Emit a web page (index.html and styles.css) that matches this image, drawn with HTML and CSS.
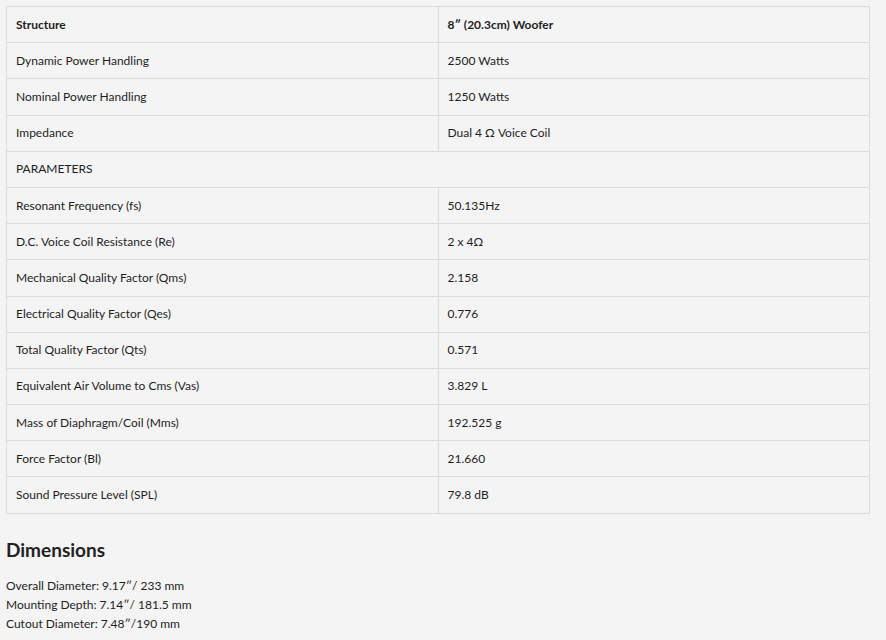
FILE: index.html
```html
<!DOCTYPE html>
<html lang="en">
<head>
    <meta charset="UTF-8">
    <meta name="viewport" content="width=device-width, initial-scale=1.0">
    <title>Specifications</title>
    <link rel="stylesheet" href="styles.css">
</head>
<body>
    <div class="specs">
        <table class="spec-table">
            <tr class="head">
                <td>Structure</td>
                <td>8″ (20.3cm) Woofer</td>
            </tr>
            <tr>
                <td>Dynamic Power Handling</td>
                <td>2500 Watts</td>
            </tr>
            <tr>
                <td>Nominal Power Handling</td>
                <td>1250 Watts</td>
            </tr>
            <tr>
                <td>Impedance</td>
                <td>Dual 4 Ω Voice Coil</td>
            </tr>
            <tr>
                <td colspan="2">PARAMETERS</td>
            </tr>
            <tr>
                <td>Resonant Frequency (fs)</td>
                <td>50.135Hz</td>
            </tr>
            <tr>
                <td>D.C. Voice Coil Resistance (Re)</td>
                <td>2 x 4Ω</td>
            </tr>
            <tr>
                <td>Mechanical Quality Factor (Qms)</td>
                <td>2.158</td>
            </tr>
            <tr>
                <td>Electrical Quality Factor (Qes)</td>
                <td>0.776</td>
            </tr>
            <tr>
                <td>Total Quality Factor (Qts)</td>
                <td>0.571</td>
            </tr>
            <tr>
                <td>Equivalent Air Volume to Cms (Vas)</td>
                <td>3.829 L</td>
            </tr>
            <tr>
                <td>Mass of Diaphragm/Coil (Mms)</td>
                <td>192.525 g</td>
            </tr>
            <tr>
                <td>Force Factor (Bl)</td>
                <td>21.660</td>
            </tr>
            <tr>
                <td>Sound Pressure Level (SPL)</td>
                <td>79.8 dB</td>
            </tr>
        </table>

        <h2>Dimensions</h2>
        <p class="dims">
            Overall Diameter: 9.17″/ 233 mm<br>
            Mounting Depth: 7.14″/ 181.5 mm<br>
            Cutout Diameter: 7.48″/190 mm
        </p>
    </div>
</body>
</html>
```

FILE: styles.css
```css
html {
    overflow: hidden;
}
body {
    font-family: Lato, "Open Sans", sans-serif;
    margin: 0;
    padding: 6px 16px 0 6px;
    background: #f4f4f4;
    color: #1e1e1e;
    font-size: 12px;
}
.spec-table {
    width: 100%;
    border-collapse: collapse;
    table-layout: fixed;
}
.spec-table td {
    border: 1px solid #dcdcdc;
    height: 35.2px;
    padding: 0 9px;
    line-height: 16px;
    vertical-align: middle;
}
.spec-table tr.head td {
    font-weight: bold;
}
.specs h2 {
    margin: 24px 0 0;
    font-size: 19px;
    font-weight: bold;
    color: #222;
}
.dims {
    margin: 15px 0 0;
    line-height: 19px;
}
```
